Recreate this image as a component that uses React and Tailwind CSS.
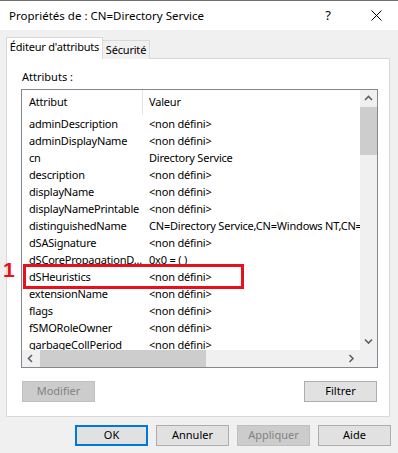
const rows = [
  ["adminDescription", "<non défini>"],
  ["adminDisplayName", "<non défini>"],
  ["cn", "Directory Service"],
  ["description", "<non défini>"],
  ["displayName", "<non défini>"],
  ["displayNamePrintable", "<non défini>"],
  ["distinguishedName", "CN=Directory Service,CN=Windows NT,CN=Services,CN=Configuration"],
  ["dSASignature", "<non défini>"],
  ["dSCorePropagationD...", "0x0 = ( )"],
  ["dSHeuristics", "<non défini>"],
  ["extensionName", "<non défini>"],
  ["flags", "<non défini>"],
  ["fSMORoleOwner", "<non défini>"],
  ["garbageCollPeriod", "<non défini>"],
];

function Arrow({ dir }) {
  const pts = {
    up: "1,5 4.5,1.5 8,5",
    down: "1,1.5 4.5,5 8,1.5",
    left: "5,1 1.5,4.5 5,8",
    right: "1.5,1 5,4.5 1.5,8",
  }[dir];
  const wide = dir === "up" || dir === "down";
  return (
    <svg width={wide ? 9 : 7} height={wide ? 7 : 9} viewBox={wide ? "0 0 9 7" : "0 0 7 9"}>
      <polyline points={pts} fill="none" stroke="#606060" strokeWidth="1.6" />
    </svg>
  );
}

function Button({ children, disabled, primary }) {
  let cls = "w-[73px] h-[21px] flex items-center justify-center text-[11px] ";
  if (disabled) cls += "bg-[#cccccc] border border-[#bfbfbf] text-[#838383]";
  else if (primary) cls += "bg-[#e1e1e1] border-2 border-[#0078d7] text-black";
  else cls += "bg-[#e1e1e1] border border-[#adadad] text-black";
  return <div className={cls}>{children}</div>;
}

export default function App() {
  return (
    <div className="relative w-[398px] h-[453px] bg-[#f0f0f0] overflow-hidden text-black font-['Noto_Sans',sans-serif]">
      {/* title bar */}
      <div className="h-[30px] bg-white border-t border-[#707070] flex items-center pl-[9px] text-[11.5px]">
        <span>Propriétés de : CN=Directory Service</span>
        <span className="ml-auto mr-[40px] text-[13px]">?</span>
        <svg width="11" height="11" viewBox="0 0 11 11" className="mr-[16px]">
          <path d="M0.5 0.5 L10.5 10.5 M10.5 0.5 L0.5 10.5" stroke="#000" strokeWidth="1" />
        </svg>
      </div>

      {/* tabs */}
      <div className="pt-[7px]">
        <div className="flex items-end pl-[6px] h-[22px] -mb-px relative z-10">
          <div className="w-[97px] h-[22px] bg-white border border-b-0 border-[#d9d9d9] flex items-center justify-center text-[11px] tracking-[-0.2px] pb-[2px] whitespace-nowrap">
            Éditeur d'attributs
          </div>
          <div className="w-[47px] h-[19px] bg-[#f0f0f0] border border-l-0 border-b-0 border-[#d9d9d9] flex items-center justify-center text-[11px] tracking-[-0.2px] whitespace-nowrap">
            Sécurité
          </div>
        </div>

        {/* panel */}
        <div className="ml-[6px] w-[384px] h-[359px] bg-white border border-[#d9d9d9] pt-[11px] pl-[14px]">
          <div className="ml-[1px] text-[11px] leading-[14px]">Attributs :</div>

          <div className="mt-[5px] w-[357px] h-[279px] border border-[#828790] flex flex-col">
            <div className="flex h-[260px]">
              <div className="relative w-[338px] h-[260px] overflow-hidden text-[11px] tracking-[-0.2px]">
                <div className="flex h-[25px] items-center whitespace-nowrap">
                  <div className="w-[121px] pl-[7px] border-r border-[#e5e5e5] h-full flex items-center">Attribut</div>
                  <div className="pl-[6px]">Valeur</div>
                </div>
                {rows.map(([a, v]) => (
                  <div key={a} className="flex h-[17px] leading-[17px] whitespace-nowrap">
                    <div className="w-[121px] shrink-0 pl-[7px] overflow-hidden">{a}</div>
                    <div className="pl-[6px]">{v}</div>
                  </div>
                ))}
                <div className="absolute left-[1px] top-[174px] w-[221px] h-[25px] border-[3px] border-[#e8101a]" />
              </div>
              <div className="w-[17px] h-[260px] bg-[#f0f0f0] flex flex-col items-center">
                <div className="h-[17px] flex items-center justify-center"><Arrow dir="up" /></div>
                <div className="w-[17px] h-[48px] bg-[#cdcdcd]" />
                <div className="flex-1" />
                <div className="h-[17px] flex items-center justify-center"><Arrow dir="down" /></div>
              </div>
            </div>
            <div className="flex h-[17px]">
              <div className="w-[338px] bg-[#f0f0f0] flex items-center">
                <div className="w-[17px] flex items-center justify-center"><Arrow dir="left" /></div>
                <div className="ml-px w-[166px] h-[17px] bg-[#cdcdcd]" />
                <div className="flex-1" />
                <div className="w-[17px] flex items-center justify-center"><Arrow dir="right" /></div>
              </div>
              <div className="w-[17px] bg-[#f0f0f0]" />
            </div>
          </div>

          <div className="mt-[13px] ml-px w-[355px] flex justify-between">
            <Button disabled>Modifier</Button>
            <Button>Filtrer</Button>
          </div>
        </div>
      </div>

      {/* dialog buttons */}
      <div className="mt-[8px] flex justify-end gap-[8px] pr-[7px]">
        <Button primary>OK</Button>
        <Button>Annuler</Button>
        <Button disabled>Appliquer</Button>
        <Button>Aide</Button>
      </div>

      <div className="absolute left-[3px] top-[258px] text-[21px] leading-[24px] font-bold text-[#e8101a] font-['Liberation_Sans',sans-serif]">
        1
      </div>
    </div>
  );
}
